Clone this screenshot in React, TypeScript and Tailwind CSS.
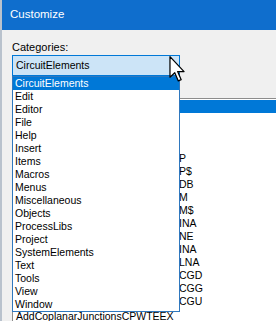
import React from 'react';

const categories = [
  'CircuitElements',
  'Edit',
  'Editor',
  'File',
  'Help',
  'Insert',
  'Items',
  'Macros',
  'Menus',
  'Miscellaneous',
  'Objects',
  'ProcessLibs',
  'Project',
  'SystemElements',
  'Text',
  'Tools',
  'View',
  'Window'
];

// tails of the command names that stick out right of the open dropdown
const commandTails = ['', '', '', '', 'P', 'P$', 'DB', 'M', 'M$', 'INA', 'NE', 'INA', 'LNA', 'CGD', 'CGG', 'CGU'];

const font = { fontFamily: '"Liberation Sans", Arial, sans-serif' };

const Cursor = () => (
  <svg width="17" height="26" viewBox="0 0 12 19" className="absolute left-[167px] top-[56px]">
    <path
      d="M0.5 0.5 L0.5 15.5 L4 12.2 L6.6 18.2 L8.7 17.3 L6.1 11.4 L10.8 11.4 Z"
      fill="#ffffff"
      stroke="#000000"
      strokeWidth="0.9"
      strokeLinejoin="round"
    />
  </svg>
);

const App = () => {
  return (
    <div
      className="relative w-[276px] h-[321px] overflow-hidden bg-[#f0f0f0] border-l-2 border-[#b9c2cd] text-black"
      style={font}
    >
      <div className="h-[30px] bg-[#0f6ecd] flex items-center pl-[8px] text-white text-[11.5px]">
        Customize
      </div>

      <div className="pl-[10px]">
        <div className="pt-[11px] h-[25px] text-[11px] leading-[13px]">Categories:</div>
        <div className="w-[168px] h-[21px] border border-[#0078d7] bg-[#cce4f7] flex items-center pl-[3px] text-[10.5px]">
          CircuitElements
        </div>

        <div className="mt-[22px] border-t border-l border-[#8c8c8c] bg-white h-[240px] pt-[1px]">
          <div className="h-[13px] bg-[#0078d7]" />
          {commandTails.slice(1).map((tail, i) => (
            <div key={i} className="h-[13px] flex items-center text-[10.5px] leading-[13px] whitespace-nowrap">
              <span className="ml-[166px]">{tail}</span>
            </div>
          ))}
          <div className="h-[13px] flex items-center text-[10.5px] leading-[13px] whitespace-nowrap pl-[3px] pt-[3px]">
            AddCoplanarJunctionsCPWTEEX
          </div>
        </div>
      </div>

      <div className="absolute left-[10px] top-[76px] w-[168px] h-[236px] border border-[#2f78be] bg-white">
        {categories.map((name, i) => (
          <div
            key={name}
            className={`h-[13px] flex items-center pl-[2px] text-[10.5px] leading-[13px] ${
              i === 0 ? 'bg-[#0078d7] text-white' : 'text-black'
            }`}
          >
            {name}
          </div>
        ))}
      </div>

      <Cursor />
    </div>
  );
};

export default App;
